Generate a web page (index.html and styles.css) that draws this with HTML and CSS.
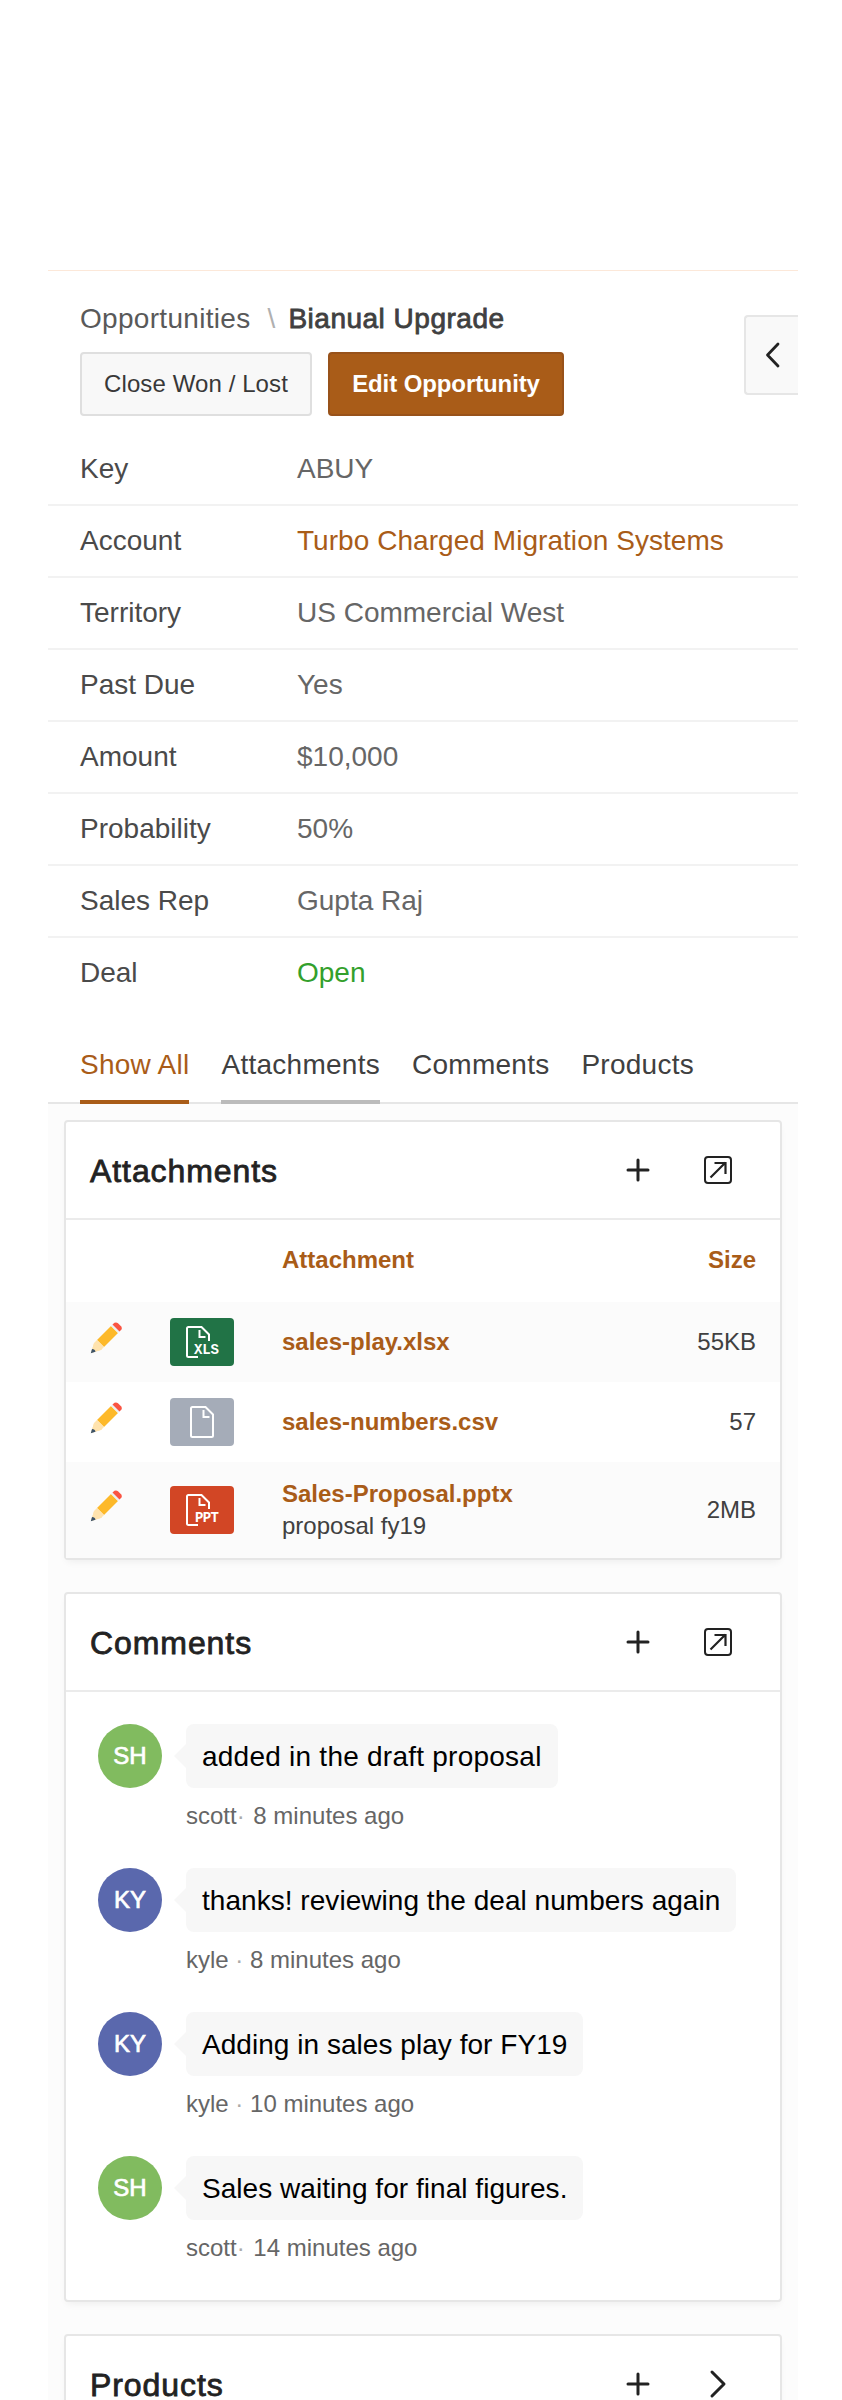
FILE: index.html
```
<!DOCTYPE html>
<html lang="en">
<head>
    <meta charset="UTF-8">
    <meta name="viewport" content="width=device-width, initial-scale=1.0">
    <title>Bianual Upgrade</title>
    <link rel="stylesheet" href="styles.css">
</head>
<body>
    <!-- shared icons -->
    <svg class="sprite" width="0" height="0">
        <symbol id="icon-plus" viewBox="0 0 32 32">
            <path d="M16 6v20M6 16h20" fill="none" stroke="#222" stroke-width="3" stroke-linecap="round"/>
        </symbol>
        <symbol id="icon-open" viewBox="0 0 32 32">
            <rect x="3" y="3" width="26" height="26" rx="3" fill="none" stroke="#222" stroke-width="2"/>
            <path d="M8.500 23.500L23.500 8.500M12.500 9h11v11" fill="none" stroke="#222" stroke-width="2.200"/>
        </symbol>
        <symbol id="icon-next" viewBox="0 0 32 32">
            <path d="M10 4L22 16L10 28" fill="none" stroke="#222" stroke-width="3" stroke-linecap="round" stroke-linejoin="round"/>
        </symbol>
        <symbol id="icon-pencil" viewBox="0 0 32 32">
            <path d="M1 31L4 21.500L12 27.500z" fill="#ffe3ae"/>
            <path d="M7 18L21 4L28 11L14 25z" fill="#fdb92a"/>
            <path d="M1 31L4 21L7 18L14 25L11 28z" fill="#ffe3ae"/>
            <path d="M.8 31.300L2 27Q5 27 5.500 29.800z" fill="#3d5368"/>
            <path d="M21 4L23 2L30 9L28 11z" fill="#eceff1"/>
            <path d="M22.500 2.500L24.500 .8Q26.300 -.2 28 1.300L31 4.200Q32.500 6 31.300 7.700L29.500 9.500z" fill="#fa5442"/>
        </symbol>
    </svg>

    <div class="page">
        <header class="page-header">
            <nav class="breadcrumb">
                <a class="crumb">Opportunities</a>
                <span class="crumb-sep">\</span>
                <span class="crumb-current">Bianual Upgrade</span>
            </nav>
            <div class="actions">
                <button class="btn btn-close">Close Won / Lost</button>
                <button class="btn btn-hot">Edit Opportunity</button>
            </div>
            <button class="side-toggle">
                <svg width="32" height="32" viewBox="0 0 32 32"><path d="M21 5L10.500 16L21 27" fill="none" stroke="#222" stroke-width="2.800" stroke-linecap="round" stroke-linejoin="round"/></svg>
            </button>
        </header>

        <dl class="details">
            <div class="detail"><dt>Key</dt><dd>ABUY</dd></div>
            <div class="detail"><dt>Account</dt><dd><a class="link">Turbo Charged Migration Systems</a></dd></div>
            <div class="detail"><dt>Territory</dt><dd>US Commercial West</dd></div>
            <div class="detail"><dt>Past Due</dt><dd>Yes</dd></div>
            <div class="detail"><dt>Amount</dt><dd>$10,000</dd></div>
            <div class="detail"><dt>Probability</dt><dd>50%</dd></div>
            <div class="detail"><dt>Sales Rep</dt><dd>Gupta Raj</dd></div>
            <div class="detail"><dt>Deal</dt><dd class="open">Open</dd></div>
        </dl>

        <nav class="tabs">
            <a class="tab active">Show All</a>
            <a class="tab hover">Attachments</a>
            <a class="tab">Comments</a>
            <a class="tab">Products</a>
        </nav>

        <main class="regions">
            <section class="card">
                <div class="card-header">
                    <h2>Attachments</h2>
                    <svg class="icon"><use href="#icon-plus"/></svg>
                    <svg class="icon"><use href="#icon-open"/></svg>
                </div>
                <div class="file file-head">
                    <span></span>
                    <span></span>
                    <b>Attachment</b>
                    <b class="size">Size</b>
                </div>
                <div class="file odd">
                    <svg class="pencil"><use href="#icon-pencil"/></svg>
                    <svg class="thumb xls" viewBox="0 0 64 48">
                        <path d="M28 39H18.500Q17 39 17 37.500V10.500Q17 9 18.500 9H31.500L39 16.500V23M29.500 12V19H35.500" fill="none" stroke="#fff" stroke-width="2"/>
                        <text x="24" y="36" textLength="25">XLS</text>
                    </svg>
                    <a class="file-name">sales-play.xlsx</a>
                    <span class="size">55KB</span>
                </div>
                <div class="file">
                    <svg class="pencil"><use href="#icon-pencil"/></svg>
                    <svg class="thumb csv" viewBox="0 0 64 48">
                        <path d="M22.500 9H35.500L43 16.500V37.500Q43 39 41.500 39H22.500Q21 39 21 37.500V10.500Q21 9 22.500 9zM33.500 12V19H39.500" fill="none" stroke="#fff" stroke-width="2"/>
                    </svg>
                    <a class="file-name">sales-numbers.csv</a>
                    <span class="size">57</span>
                </div>
                <div class="file odd tall">
                    <svg class="pencil"><use href="#icon-pencil"/></svg>
                    <svg class="thumb ppt" viewBox="0 0 64 48">
                        <path d="M28 39H18.500Q17 39 17 37.500V10.500Q17 9 18.500 9H31.500L39 16.500V23M29.500 12V19H35.500" fill="none" stroke="#fff" stroke-width="2"/>
                        <text x="25" y="36" textLength="24">PPT</text>
                    </svg>
                    <div>
                        <a class="file-name">Sales-Proposal.pptx</a>
                        <p class="file-note">proposal fy19</p>
                    </div>
                    <span class="size">2MB</span>
                </div>
            </section>

            <section class="card">
                <div class="card-header">
                    <h2>Comments</h2>
                    <svg class="icon"><use href="#icon-plus"/></svg>
                    <svg class="icon"><use href="#icon-open"/></svg>
                </div>
                <ul class="comments">
                    <li class="comment">
                        <span class="avatar green">SH</span>
                        <div>
                            <p class="bubble wide">added in the draft proposal</p>
                            <p class="meta">scott<i class="tight">·</i> 8 minutes ago</p>
                        </div>
                    </li>
                    <li class="comment">
                        <span class="avatar blue">KY</span>
                        <div>
                            <p class="bubble">thanks! reviewing the deal numbers again</p>
                            <p class="meta">kyle <i>·</i> 8 minutes ago</p>
                        </div>
                    </li>
                    <li class="comment">
                        <span class="avatar blue">KY</span>
                        <div>
                            <p class="bubble">Adding in sales play for FY19</p>
                            <p class="meta">kyle <i>·</i> 10 minutes ago</p>
                        </div>
                    </li>
                    <li class="comment">
                        <span class="avatar green">SH</span>
                        <div>
                            <p class="bubble">Sales waiting for final figures.</p>
                            <p class="meta">scott<i class="tight">·</i> 14 minutes ago</p>
                        </div>
                    </li>
                </ul>
            </section>

            <section class="card">
                <div class="card-header">
                    <h2>Products</h2>
                    <svg class="icon"><use href="#icon-plus"/></svg>
                    <svg class="icon"><use href="#icon-next"/></svg>
                </div>
            </section>
        </main>
    </div>
</body>
</html>
```
FILE: styles.css
```
* {
    box-sizing: border-box;
}
body {
    margin: 0;
    height: 2400px;
    overflow: hidden;
    background-color: #fff;
    color: #404040;
    font-family: "Liberation Sans", Arial, sans-serif;
    font-size: 28px;
}
h2, p, ul, dl, dd {
    margin: 0;
    padding: 0;
}
.sprite {
    position: absolute;
}
.page {
    width: 750px;
    margin: 270px 0 0 48px;
    border-top: 1px solid #fce8d9;
}

/* header */
.page-header {
    position: relative;
    height: 163px;
    padding: 32px 32px 0;
}
.breadcrumb {
    display: flex;
    height: 32px;
    line-height: 32px;
}
.crumb {
    color: #595959;
    letter-spacing: 0.3px;
}
.crumb-sep {
    width: 38px;
    padding-left: 4px;
    text-align: center;
    color: #b0b0b0;
}
.crumb-current {
    letter-spacing: 0.5px;
    -webkit-text-stroke: 0.8px #404040;
}
.actions {
    display: flex;
    gap: 16px;
    margin-top: 17px;
}
.btn {
    height: 64px;
    padding: 0;
    border: 2px solid #dfdfdf;
    border-radius: 4px;
    background-color: #f8f8f8;
    color: #383838;
    font-family: inherit;
    font-size: 24px;
}
.btn-close {
    width: 232px;
    letter-spacing: 0.1px;
}
.btn-hot {
    width: 236px;
    border-color: #98521a;
    background-color: #a95c18;
    color: #fff;
    font-weight: bold;
    letter-spacing: -0.1px;
}
.side-toggle {
    position: absolute;
    top: 44px;
    right: 0;
    width: 54px;
    height: 80px;
    padding: 0 0 0 11px;
    border: 2px solid #e6e6e6;
    border-right: 0;
    border-radius: 4px 0 0 4px;
    background-color: #f9f9f9;
}
.side-toggle svg {
    display: block;
}

/* details list */
.detail {
    display: flex;
    height: 72px;
    padding-left: 32px;
    border-bottom: 2px solid #f2f2f2;
    line-height: 70px;
}
.detail:last-child {
    border-bottom: 0;
}
.detail dt {
    width: 217px;
    color: #4a4a4a;
}
.detail dd {
    color: #666;
}
.detail .link {
    color: #a95c18;
    letter-spacing: 0.05px;
}
.detail .open {
    color: #33a02c;
}

/* tabs */
.tabs {
    display: flex;
    gap: 32px;
    height: 94px;
    padding: 22px 32px 0;
    border-bottom: 2px solid #e6e6e6;
    line-height: 66px;
    letter-spacing: 0.26px;
}
.tab {
    height: 72px;
    border-bottom: 4px solid transparent;
}
.tab.active {
    border-color: #a95c18;
    color: #a95c18;
}
.tab.hover {
    border-color: #bbb;
}

/* region cards */
.regions {
    padding: 16px;
    background-color: #fcfcfc;
}
.card {
    margin-bottom: 32px;
    border: 2px solid #e6e6e6;
    border-radius: 4px;
    background-color: #fff;
    box-shadow: 0 4px 8px -3px rgba(0, 0, 0, 0.07);
}
.card-header {
    display: flex;
    align-items: center;
    height: 98px;
    padding: 0 46px 0 24px;
    border-bottom: 2px solid #ebebeb;
}
.card-header h2 {
    flex: 1;
    padding-top: 2px;
    color: #222;
    font-size: 32px;
    font-weight: normal;
    letter-spacing: 0.92px;
    -webkit-text-stroke: 0.8px #222;
}
.icon {
    width: 32px;
    height: 32px;
}
.icon + .icon {
    margin-left: 48px;
}

/* attachments */
.file {
    display: grid;
    grid-template-columns: 80px 112px 1fr 100px;
    align-items: center;
    height: 80px;
    padding: 0 24px;
    font-size: 24px;
    line-height: 32px;
}
.file.odd {
    background-color: #fbfbfb;
}
.file.tall {
    height: 96px;
}
.file-head {
    height: 82px;
    padding-bottom: 2px;
    color: #a95c18;
}
.size {
    text-align: right;
}
.file-name {
    color: #a95c18;
    font-weight: bold;
}
.pencil {
    width: 32px;
    height: 32px;
    margin-top: -8px;
}
.thumb {
    width: 64px;
    height: 48px;
    border-radius: 4px;
}
.thumb text {
    fill: #fff;
    font-family: "Liberation Mono", monospace;
    font-size: 14px;
    font-weight: bold;
}
.xls {
    background-color: #217346;
}
.csv {
    background-color: #a5acb8;
}
.ppt {
    background-color: #d24625;
}

/* comments */
.comments {
    height: 608px;
    padding: 32px;
    list-style: none;
}
.comment {
    display: flex;
    gap: 24px;
    height: 144px;
}
.avatar {
    width: 64px;
    height: 64px;
    border-radius: 50%;
    color: #fff;
    font-size: 24px;
    line-height: 64px;
    text-align: center;
    -webkit-text-stroke: 0.7px #fff;
}
.green {
    background-color: #81bb5f;
}
.blue {
    background-color: #5a68ad;
}
.bubble {
    position: relative;
    width: max-content;
    height: 64px;
    padding: 0 16px;
    border-radius: 8px;
    background-color: #f7f7f7;
    color: #000;
    line-height: 66px;
    letter-spacing: 0.04px;
}
.bubble.wide {
    letter-spacing: 0.24px;
}
.bubble::before {
    content: "";
    position: absolute;
    top: 20px;
    left: -12px;
    border: solid transparent;
    border-width: 12px 12px 12px 0;
    border-right-color: #f7f7f7;
}
.meta {
    margin-top: 12px;
    color: #666;
    font-size: 24px;
    line-height: 32px;
}
.meta i {
    color: #aaa;
    font-style: normal;
}
.meta .tight {
    margin-right: 2px;
}
```
